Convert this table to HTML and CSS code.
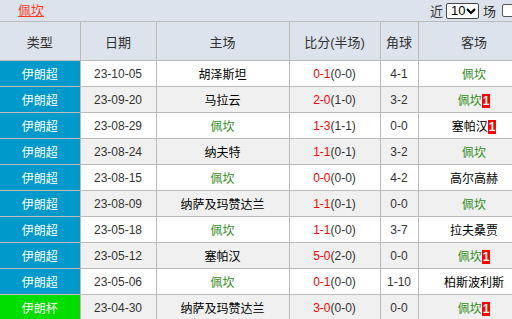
FILE: index.html
```html
<!DOCTYPE html>
<html>
<head>
<meta charset="utf-8">
<link rel="stylesheet" href="styles.css">
</head>
<body>
<div class="topbar">
  <a class="title">佩坎</a>
  <div class="ctrl">
    <span class="lbl">近</span>
    <span class="sel">10<svg width="10" height="8" viewBox="0 0 10 8"><path d="M1 2 L5 6 L9 2" fill="none" stroke="#000" stroke-width="2.2"/></svg></span>
    <span class="lbl2">场</span>
    <span class="chk"></span>
  </div>
</div>
<table class="tbl">
  <colgroup><col class="c1"><col class="c2"><col class="c3"><col class="c4"><col class="c5"><col class="c6"></colgroup>
  <thead>
    <tr><th>类型</th><th>日期</th><th>主场</th><th>比分(半场)</th><th>角球</th><th>客场</th></tr>
  </thead>
  <tbody>
    <tr><td class="lg">伊朗超</td><td>23-10-05</td><td>胡泽斯坦</td><td><span class="r">0-1</span>(0-0)</td><td>4-1</td><td><span class="g">佩坎</span></td></tr>
    <tr class="alt"><td class="lg">伊朗超</td><td>23-09-20</td><td>马拉云</td><td><span class="r">2-0</span>(1-0)</td><td>3-2</td><td><span class="g">佩坎</span><span class="rc">1</span></td></tr>
    <tr><td class="lg">伊朗超</td><td>23-08-29</td><td><span class="g">佩坎</span></td><td><span class="r">1-3</span>(1-1)</td><td>0-0</td><td>塞帕汉<span class="rc">1</span></td></tr>
    <tr class="alt"><td class="lg">伊朗超</td><td>23-08-24</td><td>纳夫特</td><td><span class="r">1-1</span>(0-1)</td><td>3-2</td><td><span class="g">佩坎</span></td></tr>
    <tr><td class="lg">伊朗超</td><td>23-08-15</td><td><span class="g">佩坎</span></td><td><span class="r">0-0</span>(0-0)</td><td>4-2</td><td>高尔高赫</td></tr>
    <tr class="alt"><td class="lg">伊朗超</td><td>23-08-09</td><td>纳萨及玛赞达兰</td><td><span class="r">1-1</span>(0-1)</td><td>0-0</td><td><span class="g">佩坎</span></td></tr>
    <tr><td class="lg">伊朗超</td><td>23-05-18</td><td><span class="g">佩坎</span></td><td><span class="r">1-1</span>(0-0)</td><td>3-7</td><td>拉夫桑贾</td></tr>
    <tr class="alt"><td class="lg">伊朗超</td><td>23-05-12</td><td>塞帕汉</td><td><span class="r">5-0</span>(2-0)</td><td>0-0</td><td><span class="g">佩坎</span><span class="rc">1</span></td></tr>
    <tr><td class="lg">伊朗超</td><td>23-05-06</td><td><span class="g">佩坎</span></td><td><span class="r">0-1</span>(0-0)</td><td>1-10</td><td>柏斯波利斯</td></tr>
    <tr class="alt"><td class="lg cup">伊朗杯</td><td>23-04-30</td><td>纳萨及玛赞达兰</td><td><span class="r">3-0</span>(0-0)</td><td>0-0</td><td><span class="g">佩坎</span><span class="rc">1</span></td></tr>
  </tbody>
</table>
</body>
</html>
```
FILE: styles.css
```css
html, body {
  margin: 0;
  padding: 0;
  background: #dde3ec;
  font-family: "Liberation Sans", "Noto Sans CJK SC", sans-serif;
  font-size: 12px;
  color: #333;
  overflow: hidden;
}
.topbar {
  height: 21px;
  display: flex;
  align-items: center;
  justify-content: space-between;
  padding-left: 18px;
  box-sizing: border-box;
}
.title {
  color: #ff3a1a;
  text-decoration: underline;
  font-size: 13px;
  line-height: 16px;
  margin-top: 1px;
}
.ctrl {
  display: flex;
  align-items: center;
  font-size: 13px;
  color: #333;
  margin-right: -3px;
}
.lbl { margin-right: 3px; }
.lbl2 { margin-left: 4px; margin-right: 6px; }
.sel {
  display: flex;
  align-items: center;
  justify-content: space-between;
  width: 33px;
  height: 16px;
  border: 1px solid #444;
  border-radius: 2px;
  background: #fff;
  box-sizing: border-box;
  padding: 0 2px 0 4px;
  font-size: 13px;
  color: #000;
  line-height: 13px;
}
.chk {
  width: 13px;
  height: 13px;
  border: 1px solid #555;
  border-radius: 2px;
  background: #fff;
  box-sizing: border-box;
}
.tbl {
  border-collapse: collapse;
  table-layout: fixed;
  width: 530px;
}
.c1 { width: 80px; }
.c2 { width: 76px; }
.c3 { width: 133px; }
.c4 { width: 91px; }
.c5 { width: 38px; }
.c6 { width: 112px; }
.tbl th, .tbl td {
  border: 1px solid #bbb;
  text-align: center;
  padding: 0;
  white-space: nowrap;
}
.tbl th:first-child, .tbl td:first-child { border-left: none; }
.tbl th {
  height: 38px;
  font-weight: normal;
  font-size: 13px;
  color: #333;
  background: #dde3ec;
}
.tbl td {
  height: 25px;
  background: #fff;
  color: #000;
}
.tbl tr.alt td { background: #f0f0f0; }
.tbl td.lg {
  background: #0099cc;
  color: #fff;
}
.tbl tr.alt td.lg { background: #0099cc; }
.tbl tr.alt td.cup { background: #00dd00; }
.tbl td:nth-child(2), .tbl td:nth-child(4), .tbl td:nth-child(5) { color: #333; }
.r { color: #ff0000; }
.g { color: #2e8b17; }
.rc {
  display: inline-block;
  background: #ff0000;
  color: #fff;
  font-weight: bold;
  font-size: 12px;
  line-height: 14px;
  padding: 0 1px;
  vertical-align: middle;
  margin-top: -2px;
}
```
